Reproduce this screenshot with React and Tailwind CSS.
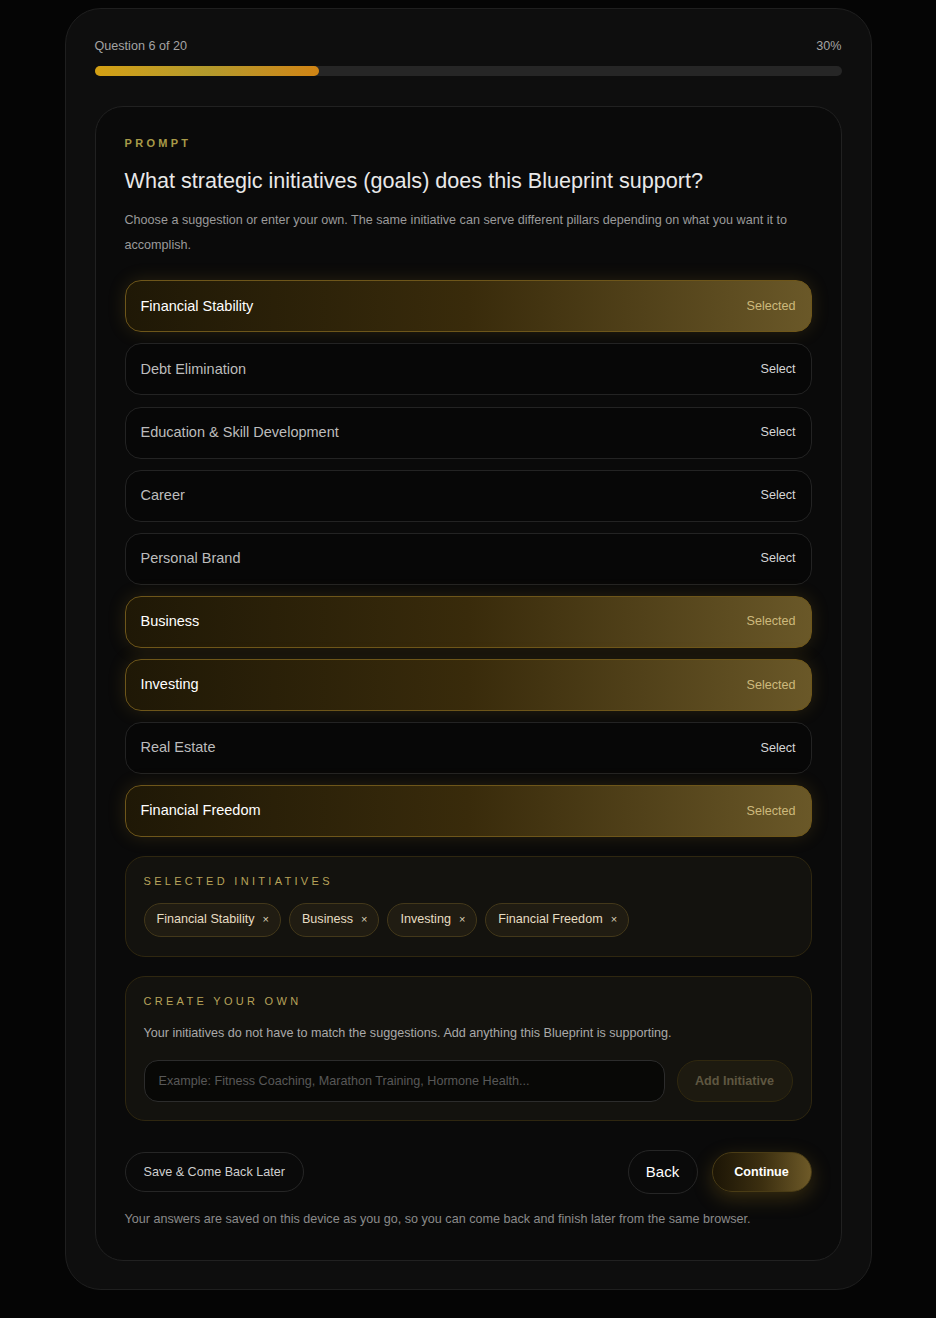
import React, { useState } from "react";

const SUGGESTIONS = [
  "Financial Stability",
  "Debt Elimination",
  "Education & Skill Development",
  "Career",
  "Personal Brand",
  "Business",
  "Investing",
  "Real Estate",
  "Financial Freedom",
];

const App = () => {
  const [selected, setSelected] = useState([
    "Financial Stability",
    "Business",
    "Investing",
    "Financial Freedom",
  ]);
  const [draft, setDraft] = useState("");

  const toggle = (name) => {
    setSelected((prev) =>
      prev.includes(name) ? prev.filter((n) => n !== name) : [...prev, name]
    );
  };

  const addDraft = () => {
    const v = draft.trim();
    if (!v || selected.includes(v)) return;
    setSelected([...selected, v]);
    setDraft("");
  };

  const progress = 30;

  return (
    <div className="min-h-screen bg-[#050505] pt-2 pb-7 font-['Liberation_Sans',Arial,sans-serif]">
      <div className="mx-auto w-[807px] rounded-[36px] border border-[#1f1f1f] bg-[#0e0e0e] px-[29px] pt-[28px] pb-[28px]">
        {/* Progress */}
        <div className="flex items-center justify-between text-[12.6px] text-[#a3a3a3]">
          <span>Question 6 of 20</span>
          <span>{progress}%</span>
        </div>
        <div className="mt-[10px] h-[10px] w-full rounded-full bg-[#262626]">
          <div
            className="h-full rounded-full bg-gradient-to-r from-[#d4a012] via-[#b39a2c] to-[#d08414]"
            style={{ width: `${progress}%` }}
          />
        </div>

        {/* Question card */}
        <div className="mt-[30px] rounded-[28px] border border-[#212121] bg-[#0a0a0a] px-[29px] pt-[28px] pb-[31px]">
          <div className="text-[11px] font-bold tracking-[0.3em] text-[#a89a48]">PROMPT</div>
          <h1 className="mt-[16px] text-[21.6px] leading-[28px] text-[#e8e8e8]">
            What strategic initiatives (goals) does this Blueprint support?
          </h1>
          <p className="mt-[13px] text-[12.6px] leading-[25px] text-[#9a9a9a]">
            Choose a suggestion or enter your own. The same initiative can serve different pillars depending on what you want it to accomplish.
          </p>

          <div className="mt-[22px] flex flex-col gap-[11.1px]">
            {SUGGESTIONS.map((name) => {
              const on = selected.includes(name);
              return (
                <button
                  key={name}
                  onClick={() => toggle(name)}
                  className={
                    on
                      ? "flex h-[52px] items-center justify-between rounded-[16px] border border-[#6e561a] bg-gradient-to-r from-[#1f1806] via-[#392b0b] to-[#6a5828] px-[15px] text-left shadow-[0_0_18px_rgba(180,140,40,0.18)]"
                      : "flex h-[52px] items-center justify-between rounded-[16px] border border-[#232323] bg-[#070707] px-[15px] text-left"
                  }
                >
                  <span className={on ? "text-[14.5px] text-white" : "text-[14.5px] text-[#bcbcbc]"}>
                    {name}
                  </span>
                  <span className={on ? "text-[12.6px] text-[#cdb97c]" : "text-[12.6px] text-[#d6d6d6]"}>
                    {on ? "Selected" : "Select"}
                  </span>
                </button>
              );
            })}
          </div>

          {/* Selected initiatives */}
          <div className="mt-[19px] rounded-[20px] border border-[#2f2710] bg-[#13120e] px-[18px] pt-[16px] pb-[19px]">
            <div className="text-[11px] tracking-[0.3em] text-[#b7a35a]">SELECTED INITIATIVES</div>
            <div className="mt-[13px] flex flex-wrap gap-[8px]">
              {selected.map((name) => (
                <span
                  key={name}
                  className="flex h-[34px] items-center gap-[8px] rounded-full border border-[#43381a] bg-[#201c12] pl-[12px] pr-[11px] text-[12.6px] text-[#e6dcc2]"
                >
                  {name}
                  <button onClick={() => toggle(name)} className="text-[11px] text-[#d8cfb6]">
                    ×
                  </button>
                </span>
              ))}
            </div>
          </div>

          {/* Create your own */}
          <div className="mt-[19px] rounded-[20px] border border-[#2f2710] bg-[#13120e] px-[18px] pt-[16px] pb-[18px]">
            <div className="text-[11px] tracking-[0.3em] text-[#b7a35a]">CREATE YOUR OWN</div>
            <p className="mt-[15px] text-[12.6px] text-[#a9a9a9]">
              Your initiatives do not have to match the suggestions. Add anything this Blueprint is supporting.
            </p>
            <div className="mt-[17px] flex items-center gap-[12px]">
              <input
                value={draft}
                onChange={(e) => setDraft(e.target.value)}
                placeholder="Example: Fitness Coaching, Marathon Training, Hormone Health..."
                className="h-[42px] flex-1 rounded-[14px] border border-[#2c2c2c] bg-[#080806] px-[14px] text-[12.6px] text-[#d6d6d6] outline-none placeholder:text-[#585858]"
              />
              <button
                onClick={addDraft}
                className="h-[42px] w-[116px] rounded-full border border-[#30280f] bg-[#1d1a10] text-[12.6px] font-bold text-[#5f5741]"
              >
                Add Initiative
              </button>
            </div>
          </div>

          {/* Actions */}
          <div className="mt-[29px] flex items-center justify-between">
            <button className="h-[40px] rounded-full border border-[#262626] px-[18px] text-[12.6px] text-[#cfcfcf]">
              Save &amp; Come Back Later
            </button>
            <div className="flex items-center gap-[14px]">
              <button className="h-[44px] w-[70px] rounded-full border border-[#262626] text-[15px] text-white">
                Back
              </button>
              <button className="h-[40px] w-[100px] rounded-full border border-[#4a3c15] bg-gradient-to-r from-[#1c1506] via-[#3c2f10] to-[#6e5a28] text-[12.6px] font-bold text-white shadow-[0_6px_20px_rgba(170,130,30,0.28)]">
                Continue
              </button>
            </div>
          </div>
          <p className="mt-[16px] text-[12.6px] text-[#8a8a8a]">
            Your answers are saved on this device as you go, so you can come back and finish later from the same browser.
          </p>
        </div>
      </div>
    </div>
  );
};

export default App;
